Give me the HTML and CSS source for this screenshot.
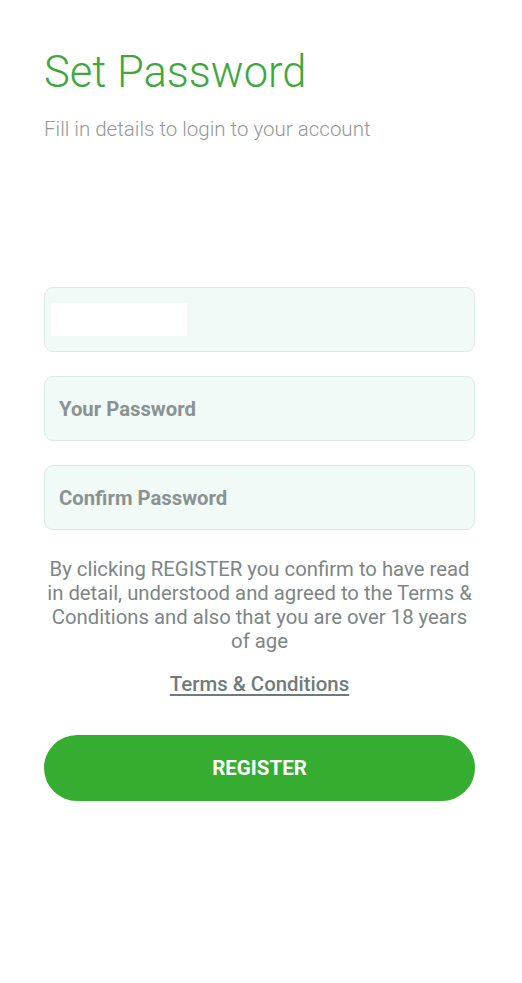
FILE: index.html
```html
<!DOCTYPE html>
<html lang="en">
<head>
<meta charset="utf-8">
<title>Set Password</title>
<link rel="stylesheet" href="styles.css">
</head>
<body>
<main class="screen">
  <header class="head">
    <h1 class="title">Set Password</h1>
    <p class="subtitle">Fill in details to login to your account</p>
  </header>
  <form class="form">
    <div class="field"><span class="mask"></span></div>
    <div class="field"><span class="placeholder">Your Password</span></div>
    <div class="field"><span class="placeholder">Confirm Password</span></div>
    <p class="note">By clicking REGISTER you confirm to have read in detail, understood and agreed to the Terms &amp; Conditions and also that you are over 18 years of age</p>
    <a class="terms" href="#">Terms &amp; Conditions</a>
    <button class="register" type="button">REGISTER</button>
  </form>
</main>
</body>
</html>
```
FILE: styles.css
```css
* { box-sizing: border-box; }
html, body { margin: 0; padding: 0; background: #ffffff; }
body { font-family: Roboto, "Noto Sans", sans-serif; }
.screen { width: 522px; padding: 0 47px 0 44px; }
.head { padding-top: 46px; }
.title {
  margin: 0;
  font-weight: 300;
  font-size: 43.5px;
  line-height: 54px;
  color: #3ea83d;
}
.subtitle {
  margin: 17px 0 0;
  font-size: 20.5px;
  font-weight: 300;
  line-height: 24px;
  color: #939898;
}
.form { display: flex; flex-direction: column; margin-top: 146px; }
.field {
  height: 65px;
  border: 1.5px solid #d8ebe4;
  border-radius: 9px;
  background: #f1faf7;
  display: flex;
  align-items: center;
  padding: 0 14px;
  margin-bottom: 24px;
}
.mask { width: 136px; height: 33px; background: #ffffff; margin-left: -8px; }
.placeholder { font-size: 20.3px; font-weight: 700; color: #8b9292; }
.note {
  margin: 3px 0 0;
  text-align: center;
  font-size: 20.3px;
  line-height: 24px;
  color: #7c8686;
}
.terms {
  margin-top: 19px;
  align-self: center;
  font-size: 20.4px;
  font-weight: 500;
  color: #6f7b7b;
  text-decoration: underline;
  text-underline-offset: 3px;
}
.register {
  margin-top: 39px;
  height: 66px;
  border: none;
  border-radius: 33px;
  background: #35ad30;
  color: #ffffff;
  font-family: Roboto, sans-serif;
  font-size: 20.5px;
  font-weight: 700;
}
```
